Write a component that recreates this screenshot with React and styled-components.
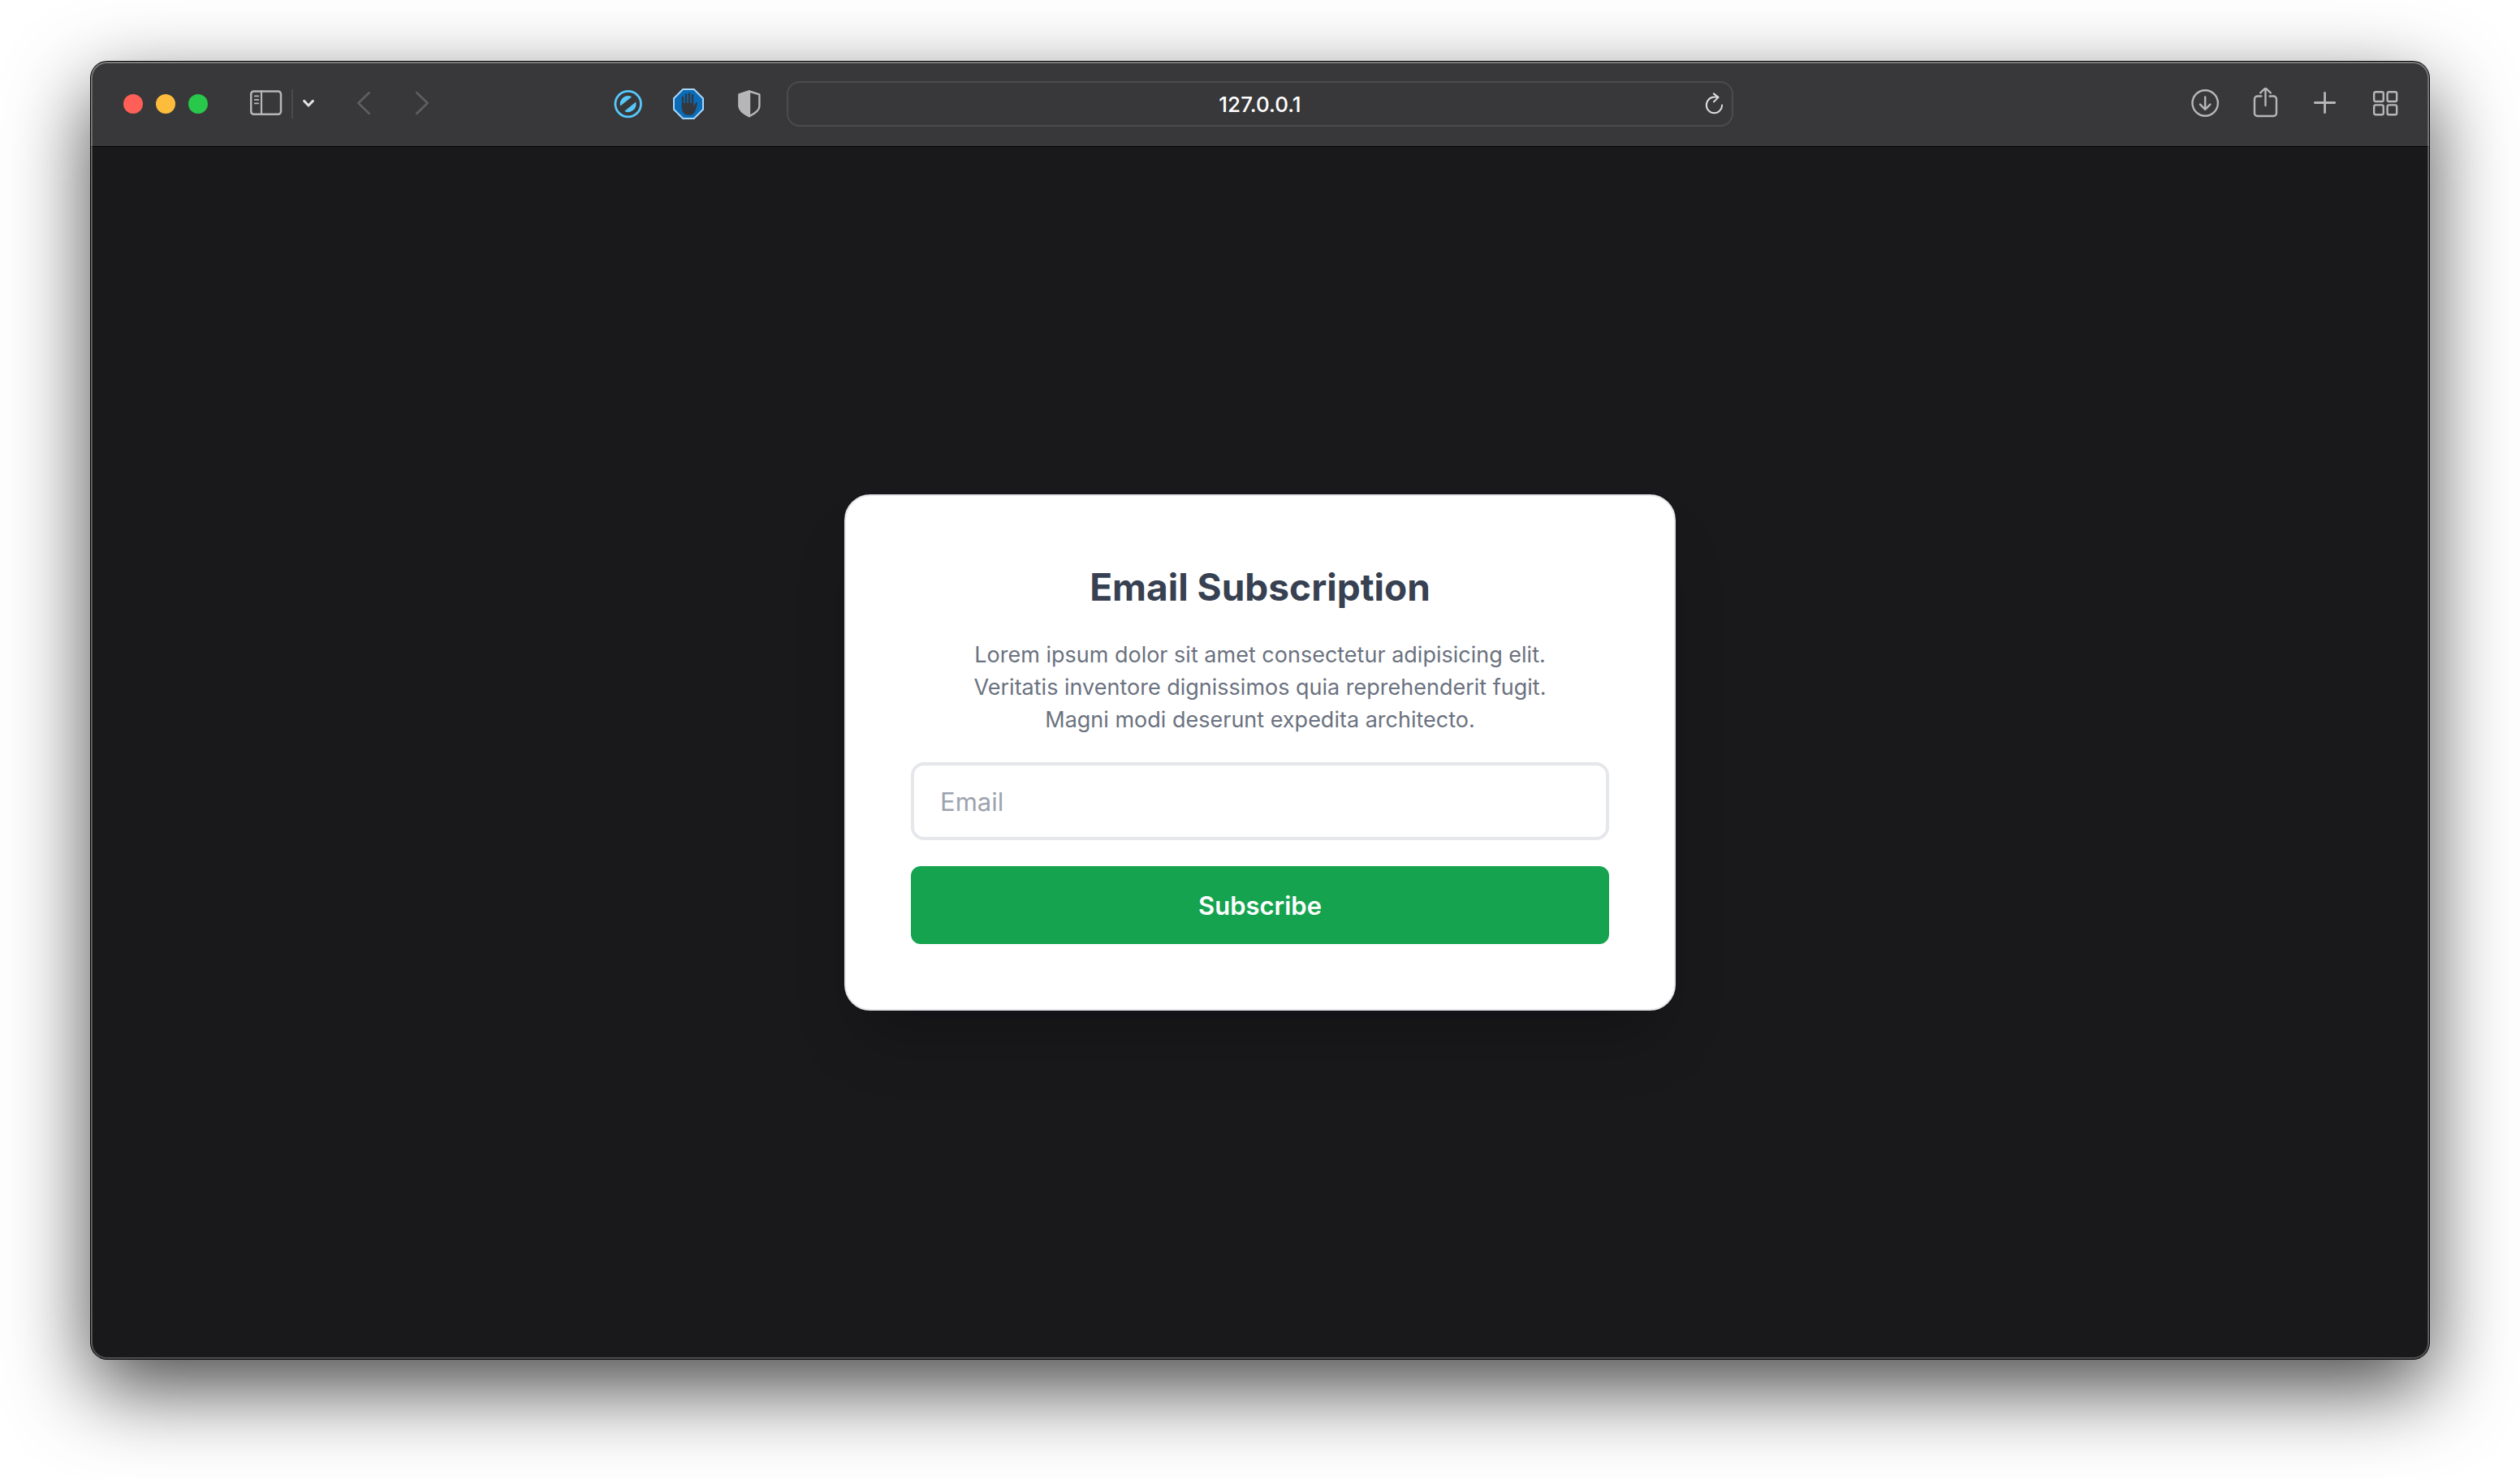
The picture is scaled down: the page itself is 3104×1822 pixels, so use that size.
import React from "react";
import styled, { createGlobalStyle } from "styled-components";

const GlobalStyle = createGlobalStyle`
  *, *::before, *::after { box-sizing: border-box; }
  body {
    margin: 0;
    background: #ffffff;
    font-family: Inter, "Liberation Sans", sans-serif;
  }
  button, input { font: inherit; }
`;

const Desktop = styled.div`
  display: flex;
  flex-direction: column;
  min-height: 100vh;
  padding: 76px 112px 148px;
  overflow: hidden;
`;

const Window = styled.div`
  position: relative;
  flex: 1;
  display: flex;
  flex-direction: column;
  border-radius: 20px;
  background: #19191b;
  box-shadow: 0 0 0 1px #000000, 0 36px 100px rgba(0, 0, 0, 0.72);

  &::after {
    content: "";
    position: absolute;
    inset: 0;
    border-radius: inherit;
    box-shadow: inset 0 1px 0 1px rgba(255, 255, 255, 0.14),
      inset 0 0 0 2px rgba(255, 255, 255, 0.23);
    pointer-events: none;
  }
`;

const Toolbar = styled.header`
  display: grid;
  grid-template-columns: 1fr minmax(0, 1166px) 1fr;
  align-items: center;
  height: 104px;
  padding: 0 33px;
  column-gap: 26px;
  border-radius: 20px 20px 0 0;
  background: #38383a;
  box-shadow: 0 1px 0 #000000;
`;

const Group = styled.div`
  display: flex;
  align-items: center;
  gap: ${(p) => p.$gap}px;
`;

const LeftSide = styled.div`
  display: flex;
  align-items: center;
  justify-content: space-between;
  padding-left: 7px;
`;

const RightSide = styled(Group)`
  justify-content: flex-end;
`;

const Light = styled.button`
  width: 24px;
  height: 24px;
  padding: 0;
  border: 0;
  border-radius: 50%;
  background: ${(p) => p.$color};
`;

const IconButton = styled.button`
  display: flex;
  align-items: center;
  justify-content: center;
  width: ${(p) => p.$width || 40}px;
  height: 40px;
  padding: 0;
  border: 0;
  background: none;
  color: ${(p) => p.$color || "#b6b6b8"};
`;

const Divider = styled.span`
  width: 2px;
  height: 36px;
  background: #4a4a4c;
`;

const AddressBar = styled.div`
  display: grid;
  grid-template-columns: 40px 1fr 40px;
  align-items: center;
  height: 56px;
  padding: 0 2px;
  border: 2px solid #4c4c4e;
  border-radius: 16px;
`;

const Address = styled.input`
  grid-column: 2;
  width: 100%;
  padding: 2px 0 0;
  border: 0;
  outline: 0;
  background: none;
  color: #ffffff;
  font-size: 26px;
  font-weight: 500;
  line-height: 32px;
  text-align: center;
`;

const Page = styled.main`
  flex: 1;
  display: flex;
  align-items: center;
  justify-content: center;
  padding: 32px;
`;

const Card = styled.form`
  display: flex;
  flex-direction: column;
  gap: 32px;
  width: 100%;
  max-width: 1024px;
  padding: 80px;
  border: 2px solid #e5e7eb;
  border-radius: 32px;
  background: #ffffff;
  box-shadow: 0 50px 80px -24px rgba(0, 0, 0, 0.25);
  text-align: center;
`;

const Title = styled.h1`
  margin: 0;
  color: #374151;
  font-size: 46px;
  font-weight: 700;
  line-height: 64px;
`;

const Description = styled.p`
  margin: 0;
  padding: 0 40px;
  color: #6b7280;
  font-size: 27px;
  line-height: 40px;
`;

const EmailInput = styled.input`
  width: 100%;
  height: 96px;
  padding: 0 32px;
  border: 4px solid #e5e7eb;
  border-radius: 16px;
  outline: 0;
  background: #ffffff;
  color: #374151;
  font-size: 31px;

  &::placeholder {
    color: #9ca3af;
    opacity: 1;
  }
`;

const SubscribeButton = styled.button`
  height: 96px;
  border: 0;
  border-radius: 12px;
  background: #15a34f;
  color: #ffffff;
  font-size: 31px;
  font-weight: 600;
`;

const Icon = ({ width = 40, stroke = 2.5, children }) => (
  <svg
    width={width}
    height="40"
    viewBox={`0 0 ${width} 40`}
    fill="none"
    stroke="currentColor"
    strokeWidth={stroke}
    strokeLinecap="round"
    strokeLinejoin="round"
    aria-hidden="true"
  >
    {children}
  </svg>
);

const SidebarIcon = () => (
  <Icon>
    <rect x="1.2" y="4.4" width="36.8" height="28.4" rx="3.5" />
    <path d="M14 4.4v28.4" strokeWidth="2.2" />
    <path d="M5.8 10.4h4.4M5.8 14.9h4.4M5.8 19.4h4.4" strokeWidth="1.8" />
  </Icon>
);

const ChevronDownIcon = () => (
  <Icon width={16} stroke={3}>
    <path d="M2.6 16.4 8 22l5.4-5.6" />
  </Icon>
);

const BackIcon = () => (
  <Icon width={32} stroke={2.8}>
    <path d="M22.6 6.2 9.4 19l13.2 12.8" />
  </Icon>
);

const ForwardIcon = () => (
  <Icon width={32} stroke={2.8}>
    <path d="M9.4 6.2 22.6 19 9.4 31.8" />
  </Icon>
);

const BlockerIcon = () => (
  <Icon stroke={2.8}>
    <circle cx="20.7" cy="20.1" r="15.8" />
    <path
      d="M11.2 22.6A9.8 9.8 0 0 1 25.2 11.3ZM30.2 17.6A9.8 9.8 0 0 1 16.2 28.9Z"
      fill="currentColor"
      stroke="none"
    />
  </Icon>
);

const HandIcon = () => (
  <Icon>
    <path
      d="M13.2 2h13.6L38 13.2v13.6L26.8 38H13.2L2 26.8V13.2Z"
      fill="#0a6cb8"
      stroke="#a9d6f8"
      strokeWidth="2"
      strokeLinejoin="miter"
    />
    <path
      d="M13 25V12M17 22V8.8M21 22V7.4M25 22V9.2"
      stroke="#34383e"
      strokeWidth="2.4"
    />
    <path
      d="M11.8 19h14.4v4.2c1.2-1.4 2-3.6 2.8-4.7.8-1.1 2.4-.6 2.1.7-.7 2.9-1.5 6.7-3.2 10.2-1.4 2.9-3.4 4.4-7 4.4-6 0-9.1-3.4-9.1-8.6Z"
      fill="#34383e"
      stroke="none"
    />
  </Icon>
);

const ShieldIcon = () => (
  <Icon stroke={2.4}>
    <path d="M20 4.5 32.4 8.3V23c0 5.5-7 9.5-12.4 12.2C14.6 32.5 7.6 28.5 7.6 23V8.3Z" />
    <path
      d="M20 4.5 7.6 8.3V23c0 5.5 7 9.5 12.4 12.2Z"
      fill="currentColor"
    />
  </Icon>
);

const ReloadIcon = () => (
  <Icon stroke={2}>
    <path d="M25.2 11.9C23.8 11.6 22.2 11.5 20.5 11.6a9.6 9.8 0 1 0 9.6 9.8" />
    <path d="M19.8 7.4 25.6 11.9 20 17.4" />
  </Icon>
);

const DownloadIcon = () => (
  <Icon stroke={2.4}>
    <circle cx="19.2" cy="19" r="15.7" />
    <path d="M19.2 11.4v15M13 20.6l6.2 6.2 6.2-6.2" />
  </Icon>
);

const ShareIcon = () => (
  <Icon stroke={2.4}>
    <path d="M14.4 10.5H9.5a3.5 3.5 0 0 0-3.5 3.5v17.5A3.5 3.5 0 0 0 9.5 35h20a3.5 3.5 0 0 0 3.5-3.5V14a3.5 3.5 0 0 0-3.5-3.5h-4.9" />
    <path d="M19.5 22V1M13.2 6.4 19.5.4l6.3 6" />
  </Icon>
);

const PlusIcon = () => (
  <Icon stroke={2.8}>
    <path d="M6.4 18.5h24.4M18.6 6.3v24.4" />
  </Icon>
);

const TabsIcon = () => (
  <Icon stroke={2.4}>
    <rect x="5.2" y="5.2" width="11.6" height="11.8" rx="2" />
    <rect x="21.6" y="5.2" width="11.6" height="11.8" rx="2" />
    <rect x="5.2" y="21.4" width="11.6" height="11.8" rx="2" />
    <rect x="21.6" y="21.4" width="11.6" height="11.8" rx="2" />
  </Icon>
);

export default function App() {
  return (
    <>
      <GlobalStyle />
      <Desktop>
        <Window>
          <Toolbar>
            <LeftSide>
              <Group $gap={52}>
                <Group $gap={16}>
                  <Light type="button" $color="#ff5f57" aria-label="Close" />
                  <Light type="button" $color="#febc3c" aria-label="Minimize" />
                  <Light type="button" $color="#28c84a" aria-label="Zoom" />
                </Group>
                <Group $gap={44}>
                  <Group $gap={11}>
                    <IconButton type="button" aria-label="Sidebar">
                      <SidebarIcon />
                    </IconButton>
                    <Divider />
                    <IconButton
                      type="button"
                      $width={16}
                      $color="#e2e2e3"
                      aria-label="Tab groups"
                    >
                      <ChevronDownIcon />
                    </IconButton>
                  </Group>
                  <Group $gap={40}>
                    <IconButton type="button" $width={32} $color="#5e5e60" aria-label="Back">
                      <BackIcon />
                    </IconButton>
                    <IconButton type="button" $width={32} $color="#5e5e60" aria-label="Forward">
                      <ForwardIcon />
                    </IconButton>
                  </Group>
                </Group>
              </Group>
              <Group $gap={35}>
                <IconButton type="button" $color="#56c8fb" aria-label="Content blocker">
                  <BlockerIcon />
                </IconButton>
                <IconButton type="button" aria-label="Ad blocker">
                  <HandIcon />
                </IconButton>
                <IconButton type="button" aria-label="Privacy report">
                  <ShieldIcon />
                </IconButton>
              </Group>
            </LeftSide>
            <AddressBar>
              <Address type="text" aria-label="Address" defaultValue="127.0.0.1" />
              <IconButton type="button" $color="#dededf" aria-label="Reload">
                <ReloadIcon />
              </IconButton>
            </AddressBar>
            <RightSide $gap={34}>
              <IconButton type="button" aria-label="Downloads">
                <DownloadIcon />
              </IconButton>
              <IconButton type="button" aria-label="Share">
                <ShareIcon />
              </IconButton>
              <IconButton type="button" aria-label="New tab">
                <PlusIcon />
              </IconButton>
              <IconButton type="button" aria-label="Tab overview">
                <TabsIcon />
              </IconButton>
            </RightSide>
          </Toolbar>
          <Page>
            <Card onSubmit={(event) => event.preventDefault()}>
              <Title>Email Subscription</Title>
              <Description>
                Lorem ipsum dolor sit amet consectetur adipisicing elit. Veritatis
                inventore dignissimos quia reprehenderit fugit. Magni modi deserunt
                expedita architecto.
              </Description>
              <EmailInput type="email" placeholder="Email" aria-label="Email" />
              <SubscribeButton type="submit">Subscribe</SubscribeButton>
            </Card>
          </Page>
        </Window>
      </Desktop>
    </>
  );
}
